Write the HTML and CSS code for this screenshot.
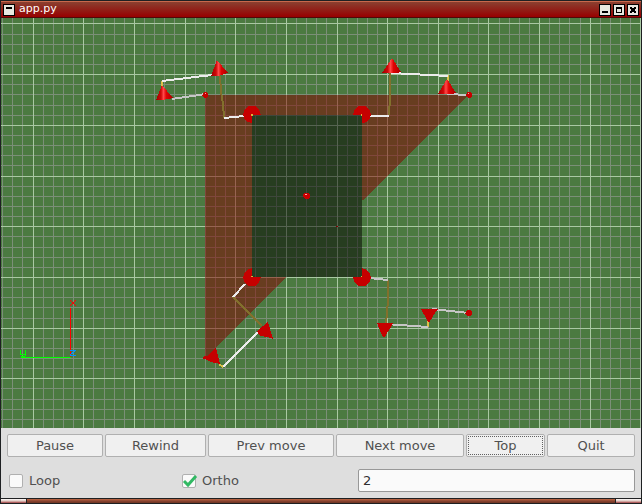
FILE: index.html
```html
<!DOCTYPE html>
<html lang="en">
<head>
<meta charset="utf-8">
<title>app.py</title>
<link rel="stylesheet" href="styles.css">
</head>
<body>
<div class="window">
  <header class="titlebar">
    <button class="winbtn" aria-label="Window menu"><svg viewBox="0 0 12 12"><path d="M3 3h6v2H3z"/></svg></button>
    <h1 class="title">app.py</h1>
    <button class="winbtn" aria-label="Minimize"><svg viewBox="0 0 12 12"><path d="M3 7h6v2H3z"/></svg></button>
    <button class="winbtn" aria-label="Maximize"><svg viewBox="0 0 12 12"><path fill-rule="evenodd" d="M3 3h6v6H3zM4 5v3h4V5z"/></svg></button>
    <button class="winbtn" aria-label="Close"><svg viewBox="0 0 12 12"><path d="M3 3h2v1h2V3h2v2H8v2h1v2H7V8H5v1H3V7h1V5H3z"/></svg></button>
  </header>
  <main class="view">
    <svg class="scene" viewBox="1 18 640 410" preserveAspectRatio="xMidYMid slice" shape-rendering="crispEdges" role="img" aria-label="Top view of the robot">
      <defs>
        <linearGradient id="cone">
          <stop offset="0" stop-color="#9c0000"/>
          <stop offset=".3" stop-color="#d00808"/>
          <stop offset=".44" stop-color="#ff4a4a"/>
          <stop offset=".6" stop-color="#e00404"/>
          <stop offset="1" stop-color="#a80000"/>
        </linearGradient>
      </defs>
      <path id="minor" class="minor"/>
      <path id="major" class="major"/>
      <path class="support" d="M205 95H469L362 201V115H252V277H286L205 358z"/>
      <path class="body" d="M252 115h110v162H252z"/>

      <path class="coxa" d="M220 76l1 16 2 12 1 14M390 73v24l-1 18M233 297l29 29M388 280v20l-2 24"/>
      <path class="link-y" d="M162 81v6M448 75v6M219 364l4 3M428 321v6"/>
      <path class="link" d="M224 118l20-2M162 81l50-6M367 116h22M391 73l57 3M245 284l-12 13M223 367l39-39"/>
      <path class="link dim" d="M172 99l34-5M447 94l22 1M369 278l19 2M386 324l42 3M432 309l37 4"/>

      <path class="red" d="M252 115v8l-5-1-3-4-1-4 2-5 4-3h6l4 3 2 6z"/>
      <path class="red" d="M362 115v8l5-1 3-4 1-4-2-5-4-3h-6l-4 3-2 6z"/>
      <path class="red" d="M252 277v-9l-5 2-3 4-1 4 2 5 4 3h6l4-3 2-6z"/>
      <path class="red" d="M362 277v-9l5 2 3 4 1 4-2 5-4 3h-6l-4-3-2-6z"/>
      <path class="joint" d="M251 114h2v2h-2zM361 114h1v2h-1zM251 276h2v1h-2zM361 276h1v1h-1z"/>

      <path class="cone" d="M162 85l11 13-4 1-8 1h-5z"/>
      <path class="cone" d="M217 60l11 13-4 1-6 2h-7z"/>
      <path class="cone" d="M392 58l9 14-5 1h-14z"/>
      <path class="cone" d="M447 79l9 14-4 1h-14z"/>
      <path class="red" d="M268 322l5 17-5-2-8-1-3-5z"/>
      <path class="red" d="M216 348l4 16-9-2-6-3 3-4z"/>
      <path class="red" d="M377 323h16l-2 4-7 11-3-5z"/>
      <path class="red" d="M421 309h17l-3 4-6 10-3-5z"/>

      <path class="red" d="M204 92h2l2 1v3l-2 2h-2l-2-2zM467 92h3l2 1v3l-1 2h-3l-2-2zM467 310h3l2 1v4l-2 1h-3l-2-2zM202 358l2-2h3v3h-4zM305 193h3l2 2v3l-2 1h-3l-2-2v-3z"/>
      <path class="glint" d="M305 194h2v1h-2zM205 93h1v1h-1zM468 93h1v1h-1z"/>
      <path class="pin" d="M336 226h2v1h-2z"/>

      <g class="axes">
        <path class="x-axis" d="M70.500 308V357M70 300l6 6M76 300l-6 6"/>
        <path class="z-axis" d="M70 350.500h6M75 351l-5 4M70 355.500h6"/>
        <path class="y-axis" d="M21 357.500H71M20.500 350v4M20 354.500h5M25.500 350v6M21 356.500h4"/>
      </g>
    </svg>
  </main>
  <form class="panel">
    <div class="actions">
      <button type="button" class="btn">Pause</button>
      <button type="button" class="btn">Rewind</button>
      <button type="button" class="btn">Prev move</button>
      <button type="button" class="btn">Next move</button>
      <button type="button" class="btn focused">Top</button>
      <button type="button" class="btn">Quit</button>
    </div>
    <div class="options">
      <label class="check"><input type="checkbox"><span>Loop</span></label>
      <label class="check"><input type="checkbox" checked><svg class="tick" viewBox="0 0 16 14"><path d="M2 7l4 4L14 2"/></svg><span>Ortho</span></label>
      <input class="field" type="text" value="2" aria-label="Speed">
    </div>
  </form>
  <footer class="resize"><span class="grip"></span><span class="bar"></span><span class="grip"></span></footer>
</div>
<script src="grid.js"></script>
</body>
</html>
```
FILE: grid.js
```js
// Ground grid: a line every cell, a bright one every fifth.
(function () {
  var step = 10.13, originX = 33.1, originY = 23.95;
  var paths = { minor: '', major: '' };
  for (var i = -4; i < 62; i++) {
    var kind = i % 5 === 0 ? 'major' : 'minor';
    paths[kind] += 'M' + Math.floor(originX + i * step) + ' 18h1v410h-1z';
    var y = Math.floor(originY + i * (step + 0.01));
    if (y >= 18 && y < 428) paths[kind] += 'M1 ' + y + 'h640v1H1z';
  }
  document.getElementById('minor').setAttribute('d', paths.minor);
  document.getElementById('major').setAttribute('d', paths.major);
})();
```
FILE: styles.css
```css
* { box-sizing: border-box; }
body {
  margin: 0;
  font: 13px/16px "DejaVu Sans", sans-serif;
  color: #505050;
}
.window {
  display: flex;
  flex-direction: column;
  min-height: 100vh;
  border: 1px solid #1e2022;
  background: #dedede;
}
.titlebar {
  display: flex;
  align-items: center;
  gap: 2px;
  height: 17px;
  padding: 0 2px;
  background: linear-gradient(#8a4030, #980000);
  border-top: 1px solid #c8684c;
  border-bottom: 1px solid #500808;
}
.title {
  flex: 1;
  margin: 0;
  padding: 0 0 2px 2px;
  font-size: 11px;
  line-height: 13px;
  font-weight: normal;
  color: #fff;
}
.winbtn {
  width: 12px;
  height: 12px;
  padding: 0;
  border: 1px solid #000;
  background: #e8e8e0;
}
.winbtn svg {
  display: block;
  width: 12px;
  height: 12px;
  margin: -1px;
  shape-rendering: crispEdges;
}
.view { flex: 1 1 0; min-height: 0; display: flex; background: #4b7a41; }
.scene { display: block; width: 100%; height: 100%; }
.minor { fill: #7b8f78; }
.major { fill: #a9c8a3; }
.support { fill: #850000; fill-opacity: .5; }
.body { fill: #030000; fill-opacity: .5; }
.link, .coxa, .link-y { fill: none; stroke: #ececec; stroke-width: 2; }
.dim { stroke: #c6c6c6; }
.coxa { stroke: #82702c; }
.link-y { stroke: #dcc048; }
.red { fill: #c60000; }
.cone { fill: url(#cone); }
.joint { fill: #dcb43c; }
.glint { fill: #ffa0a0; }
.pin { fill: #800000; }
.axes path { fill: none; stroke-width: 1; }
.axes .x-axis { stroke: #f00; }
.axes .y-axis { stroke: #0f0; }
.axes .z-axis { stroke: #0090ff; }

.panel { padding: 6px; }
.actions {
  display: grid;
  grid-template-columns: 96fr 101fr 126fr 128fr 79fr 88fr;
  gap: 2px;
  margin-bottom: 12px;
}
.btn {
  height: 23px;
  padding: 0;
  font: inherit;
  color: #505050;
  background: #f0f0f0;
  border: 1px solid #b0b0b0;
  border-radius: 2px;
}
.focused { outline: 1px dotted #606060; outline-offset: -3px; }
.options {
  display: grid;
  grid-template-columns: 173fr 178fr 277fr;
  align-items: center;
}
.check { position: relative; display: flex; align-items: center; gap: 6px; padding-left: 2px; }
.check input {
  appearance: none;
  width: 14px;
  height: 14px;
  margin: 0;
  background: #fafafa;
  border: 1px solid #b0b0b0;
  border-radius: 2px;
}
.tick { position: absolute; left: 2px; top: 1px; width: 16px; height: 14px; }
.tick path { fill: none; stroke: #32b964; stroke-width: 3; }
.field {
  width: 100%;
  min-width: 0;
  height: 23px;
  padding: 0 4px;
  font: inherit;
  color: #303030;
  background: #fafafa;
  border: 1px solid #989898;
  border-radius: 2px;
}
.resize {
  display: flex;
  height: 5px;
  border-top: 1px solid #1e2022;
}
.grip { width: 25px; background: linear-gradient(#fff, #e0c8c0 50%, #a03c40); }
.bar {
  flex: 1;
  border: solid #1e2022;
  border-width: 0 1px;
  background: linear-gradient(#c06844, #8a4430 50%, #6c3424);
}
```
